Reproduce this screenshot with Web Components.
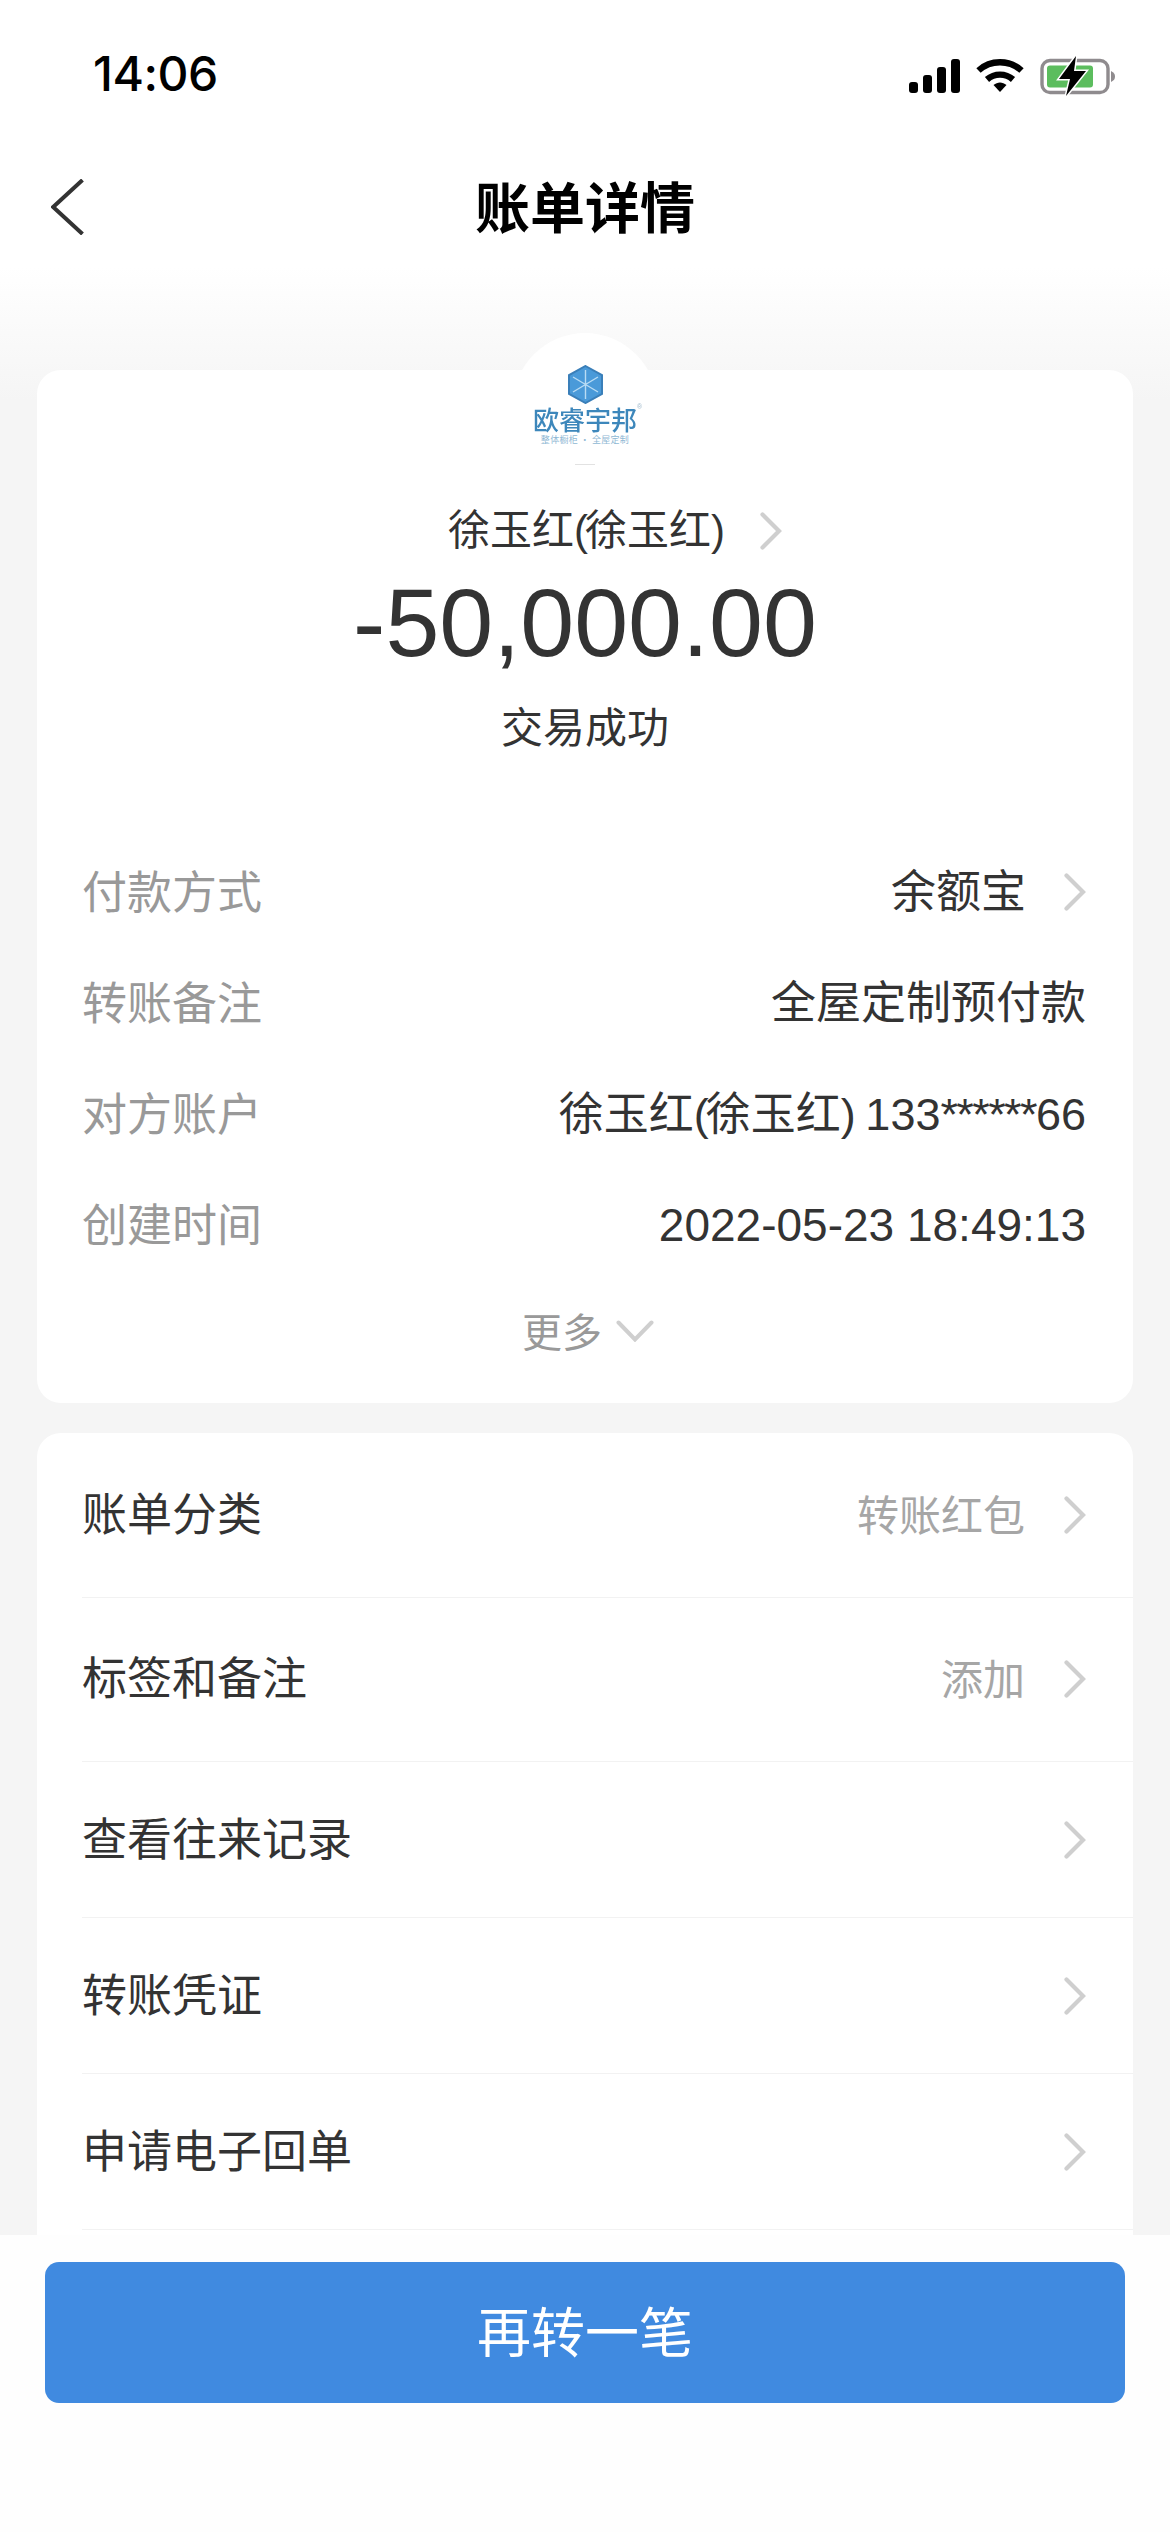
<!DOCTYPE html>
<html lang="zh">
<head>
<meta charset="utf-8">
<title>账单详情</title>
<style>
html, body { margin: 0; padding: 0; }
body {
    width: 1170px;
    height: 2532px;
    overflow: hidden;
    display: flex;
    flex-direction: column;
    background: #fff;
    font-family: "Liberation Sans", "Noto Sans CJK SC", sans-serif;
}
/* parens and asterisks are narrower in the original font */
.paren { letter-spacing: -3px; }
.stars { letter-spacing: -1.6px; }
.date { font-size: 46px; }
</style>
</head>
<body>
<status-bar></status-bar>
<nav-bar>账单详情</nav-bar>
<bill-page>
    <bill-summary>
        <span slot="name">徐玉红<span class="paren">(</span>徐玉红<span class="paren">)</span></span>
        <span slot="amount">-50,000.00</span>
        <span slot="status">交易成功</span>
        <bill-row arrow><span slot="label">付款方式</span>余额宝</bill-row>
        <bill-row><span slot="label">转账备注</span>全屋定制预付款</bill-row>
        <bill-row><span slot="label">对方账户</span>徐玉红<span class="paren">(</span>徐玉红<span class="paren">)</span> 133<span class="stars">******</span>66</bill-row>
        <bill-row><span slot="label">创建时间</span><span class="date">2022-05-23 18:49:13</span></bill-row>
    </bill-summary>
    <bill-actions>
        <action-row tall value="转账红包">账单分类</action-row>
        <action-row tall value="添加">标签和备注</action-row>
        <action-row>查看往来记录</action-row>
        <action-row>转账凭证</action-row>
        <action-row>申请电子回单</action-row>
    </bill-actions>
</bill-page>
<bottom-bar>再转一笔</bottom-bar>

<script>
const CHEVRON = `<svg width="22" height="38" viewBox="0 0 22 38" fill="none" stroke="#cfcfcf" stroke-width="4.2" stroke-linecap="round"><path d="M2.5 2.5 L19 19 L2.5 35.5"/></svg>`;

class StatusBar extends HTMLElement {
    connectedCallback() {
        this.attachShadow({ mode: 'open' });
        this.shadowRoot.innerHTML = `
            <style>
                :host { display: flex; flex: none; height: 147px; padding: 51px 54px 0 93px; box-sizing: border-box; justify-content: space-between; align-items: flex-start; background: #fff; }
                .time { font: 500 48px/46px Inter, "Liberation Sans", sans-serif; color: #000; letter-spacing: -0.5px; }
                .icons { display: flex; align-items: center; gap: 16px; padding-top: 5px; }
                svg { display: block; }
            </style>
            <div class="time">14:06</div>
            <div class="icons">
                <svg width="51" height="34" viewBox="0 0 51 34" fill="#000">
                    <rect x="0" y="23" width="9" height="11" rx="3"/>
                    <rect x="14" y="16" width="9" height="18" rx="3"/>
                    <rect x="28" y="8" width="9" height="26" rx="3"/>
                    <rect x="42" y="0" width="9" height="34" rx="3"/>
                </svg>
                <svg width="48" height="34" viewBox="0 0 48 34" fill="none" stroke="#000" stroke-width="6.4">
                    <path d="M2.5 11.5 C14.5 0.5 33.5 0.5 45.5 11.5"/>
                    <path d="M11 20.5 C18.5 14 29.5 14 37 20.5"/>
                    <path d="M17.5 26 L24 33 L30.5 26 C26.5 22.6 21.5 22.6 17.5 26 Z" fill="#000" stroke="none"/>
                </svg>
                <svg width="76" height="40" viewBox="0 0 76 40">
                    <rect x="2" y="4.5" width="66" height="32" rx="8" fill="none" stroke="#8f8b8e" stroke-width="3.4"/>
                    <rect x="7" y="9.5" width="46" height="22" rx="3" fill="#5cbd5e"/>
                    <path d="M71 15 C74 16.5 75 18 75 20.5 C75 23 74 24.5 71 26 Z" fill="#8f8b8e"/>
                    <path d="M36 0 L19 23 L30 23 L26 40 L46 15 L34 15 Z" fill="#000" stroke="#fff" stroke-width="3" paint-order="stroke"/>
                </svg>
            </div>`;
    }
}

class NavBar extends HTMLElement {
    connectedCallback() {
        this.attachShadow({ mode: 'open' });
        this.shadowRoot.innerHTML = `
            <style>
                :host { display: grid; grid-template-columns: 1fr auto 1fr; align-items: center; flex: none; height: 120px; padding-left: 51px; padding-right: 51px; background: #fff; }
                .title { font: 700 55px/60px "Noto Sans CJK SC", sans-serif; color: #000; padding-bottom: 6px; }
                svg { display: block; }
            </style>
            <svg width="33" height="56" viewBox="0 0 33 56" fill="none" stroke="#333" stroke-width="4"><path d="M31.5 1 L2.2 28 L31.5 55"/></svg>
            <div class="title"><slot></slot></div>
            <div></div>`;
    }
}

class BillPage extends HTMLElement {
    connectedCallback() {
        this.attachShadow({ mode: 'open' });
        this.shadowRoot.innerHTML = `
            <style>
                :host { display: flex; flex-direction: column; gap: 30px; flex: 1; min-height: 0; overflow: hidden; padding: 103px 37px 0; background: linear-gradient(#ffffff 0, #f5f5f5 133px); }
            </style>
            <slot></slot>`;
    }
}

class ShopLogo extends HTMLElement {
    connectedCallback() {
        this.attachShadow({ mode: 'open' });
        this.shadowRoot.innerHTML = `
            <style>
                :host { display: flex; flex-direction: column; align-items: center; position: relative; width: 144px; height: 144px; box-sizing: border-box; padding-top: 32px; border-radius: 50%; background: #fff; }
                :host::after { content: ""; position: absolute; top: 131px; left: 62px; width: 20px; height: 1px; background: #e2e2e2; }
                svg { display: block; filter: blur(0.4px); }
                .brand { font: 500 26px/26px "Noto Sans CJK SC", sans-serif; color: #3d87bb; margin-top: 2px; white-space: nowrap; position: relative; filter: blur(0.4px); }
                .brand sup { position: absolute; top: -3px; left: 100%; font: 7px/8px "Liberation Sans", sans-serif; color: #9fb9cb; }
                .tag { font: 9px/10px "Noto Sans CJK SC", sans-serif; color: #8fb8d4; margin-top: 3px; white-space: nowrap; letter-spacing: 0.3px; }
            </style>
            <svg width="35" height="39" viewBox="0 0 35 39">
                <path d="M17.5 1 L34 10.2 L34 28.8 L17.5 38 L1 28.8 L1 10.2 Z" fill="#4a9ad9" stroke="#3a7fb9" stroke-width="2"/>
                <path d="M17.5 5 V34 M5 12 L30 27 M30 12 L5 27" stroke="#b9dcf4" stroke-width="1.4"/>
            </svg>
            <div class="brand">欧睿宇邦<sup>®</sup></div>
            <div class="tag">整体橱柜 · 全屋定制</div>`;
    }
}

class BillSummary extends HTMLElement {
    connectedCallback() {
        this.attachShadow({ mode: 'open' });
        this.shadowRoot.innerHTML = `
            <style>
                :host { display: block; position: relative; flex: none; height: 1033px; box-sizing: border-box; padding: 131px 0 0; border-radius: 24px; background: #fff; }
                shop-logo { position: absolute; top: -37px; left: 476px; }
                .name { display: grid; grid-template-columns: 1fr auto 1fr; align-items: center; font: 42px/60px "Liberation Sans", "Noto Sans CJK SC", sans-serif; color: #333; }
                .name svg { display: block; margin-left: 38px; }
                .amount { margin-top: 7px; text-align: center; font: 97px/110px "Liberation Sans", sans-serif; color: #333; }
                .status { margin-top: 17px; text-align: center; font: 42px/60px "Noto Sans CJK SC", sans-serif; color: #333; }
                .rows { margin-top: 81px; }
                .more { display: flex; justify-content: center; align-items: center; gap: 14px; margin-top: 20px; padding-left: 6px; font: 40px/60px "Noto Sans CJK SC", sans-serif; color: #999; }
                .more svg { display: block; margin-top: 2px; }
            </style>
            <shop-logo></shop-logo>
            <div class="name"><span></span><slot name="name"></slot>${CHEVRON}</div>
            <div class="amount"><slot name="amount"></slot></div>
            <div class="status"><slot name="status"></slot></div>
            <div class="rows"><slot></slot></div>
            <div class="more">更多<svg width="38" height="22" viewBox="0 0 38 22" fill="none" stroke="#cfcfcf" stroke-width="4" stroke-linecap="round"><path d="M2.5 2.5 L19 19.5 L35.5 2.5"/></svg></div>`;
    }
}

class BillRow extends HTMLElement {
    connectedCallback() {
        this.attachShadow({ mode: 'open' });
        const arrow = this.hasAttribute('arrow');
        this.shadowRoot.innerHTML = `
            <style>
                :host { display: flex; justify-content: space-between; align-items: center; height: 111px; padding: 0 47px 0 45px; font: 45px/60px "Liberation Sans", "Noto Sans CJK SC", sans-serif; color: #333; }
                .label { color: #999; font-family: "Noto Sans CJK SC", sans-serif; padding-bottom: 4px; }
                .value { display: flex; align-items: center; gap: 38px; white-space: nowrap; }
                .value span { padding-top: 2px; }
                svg { display: block; }
            </style>
            <div class="label"><slot name="label"></slot></div>
            <div class="value"><span><slot></slot></span>${arrow ? CHEVRON : ''}</div>`;
    }
}

class BillActions extends HTMLElement {
    connectedCallback() {
        this.attachShadow({ mode: 'open' });
        this.shadowRoot.innerHTML = `
            <style>
                :host { display: block; flex: 1; border-radius: 24px 24px 0 0; background: #fff; }
            </style>
            <slot></slot>`;
    }
}

class ActionRow extends HTMLElement {
    connectedCallback() {
        this.attachShadow({ mode: 'open' });
        const value = this.getAttribute('value');
        this.shadowRoot.innerHTML = `
            <style>
                :host { display: block; padding-left: 45px; }
                :host([tall]) .row { height: 163.5px; }
                .row { display: flex; justify-content: space-between; align-items: center; height: 155px; padding-right: 47px; border-bottom: 1px solid #f2f2f2; font: 45px/60px "Noto Sans CJK SC", sans-serif; color: #333; }
                .label { padding-bottom: 6px; }
                .right { display: flex; align-items: center; gap: 39px; font-size: 42px; color: #a6a6a6; }
                .right span { padding-bottom: 4px; }
                svg { display: block; }
            </style>
            <div class="row">
                <div class="label"><slot></slot></div>
                <div class="right">${value ? `<span>${value}</span>` : ''}${CHEVRON}</div>
            </div>`;
    }
}

class BottomBar extends HTMLElement {
    connectedCallback() {
        this.attachShadow({ mode: 'open' });
        this.shadowRoot.innerHTML = `
            <style>
                :host { display: block; flex: none; height: 297px; box-sizing: border-box; padding: 27px 45px 0; background: #fefefe; }
                button { display: block; width: 100%; height: 141px; padding: 0 0 6px; border: 0; border-radius: 14px; background: #408ae0; color: #fff; font: 54px/60px "Noto Sans CJK SC", sans-serif; }
            </style>
            <button><slot></slot></button>`;
    }
}

customElements.define('status-bar', StatusBar);
customElements.define('nav-bar', NavBar);
customElements.define('bill-page', BillPage);
customElements.define('shop-logo', ShopLogo);
customElements.define('bill-summary', BillSummary);
customElements.define('bill-row', BillRow);
customElements.define('bill-actions', BillActions);
customElements.define('action-row', ActionRow);
customElements.define('bottom-bar', BottomBar);
</script>
</body>
</html>
